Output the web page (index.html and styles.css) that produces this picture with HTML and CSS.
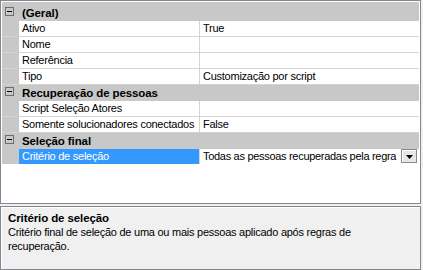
FILE: index.html
```html
<!DOCTYPE html>
<html lang="pt">
<head>
<meta charset="utf-8">
<link rel="stylesheet" href="styles.css">
</head>
<body>
<div class="grid">
  <div class="top-gap"></div>
  <div class="cat"><span class="toggle"></span><span class="cat-label">(Geral)</span></div>
  <div class="row"><div class="margin"></div><div class="name">Ativo</div><div class="value">True</div></div>
  <div class="row"><div class="margin"></div><div class="name">Nome</div><div class="value"></div></div>
  <div class="row"><div class="margin"></div><div class="name">Referência</div><div class="value"></div></div>
  <div class="row"><div class="margin"></div><div class="name">Tipo</div><div class="value">Customização por script</div></div>
  <div class="cat"><span class="toggle"></span><span class="cat-label">Recuperação de pessoas</span></div>
  <div class="row"><div class="margin"></div><div class="name">Script Seleção Atores</div><div class="value"></div></div>
  <div class="row"><div class="margin"></div><div class="name">Somente solucionadores conectados</div><div class="value">False</div></div>
  <div class="cat"><span class="toggle"></span><span class="cat-label">Seleção final</span></div>
  <div class="row selected"><div class="margin"></div><div class="name">Critério de seleção</div><div class="value"><span class="value-text">Todas as pessoas recuperadas pela regra</span><span class="drop"><svg width="7" height="4" viewBox="0 0 7 4"><path d="M0 0h7L3.5 4z" fill="#000"/></svg></span></div></div>
</div>
<div class="desc">
  <div class="desc-title">Critério de seleção</div>
  <div class="desc-text">Critério final de seleção de uma ou mais pessoas aplicado após regras de<br>recuperação.</div>
</div>
</body>
</html>
```

FILE: styles.css
```css
html, body {
  margin: 0;
  padding: 0;
}
body {
  width: 423px;
  height: 270px;
  background: #f0f0f0;
  font-family: "Liberation Sans", Arial, sans-serif;
  font-size: 11px;
  letter-spacing: -0.25px;
  color: #000;
  overflow: hidden;
}
.grid {
  box-sizing: border-box;
  width: 421px;
  height: 204px;
  border: 1px solid #828790;
  padding: 1px;
  background: #fff;
  overflow: hidden;
}
.top-gap {
  height: 3px;
  background: #c8c8c8;
}
.cat {
  box-sizing: border-box;
  height: 16px;
  background: #c8c8c8;
  display: flex;
  align-items: center;
  font-weight: bold;
  font-size: 11.5px;
  letter-spacing: -0.1px;
}
.toggle {
  box-sizing: border-box;
  width: 9px;
  height: 9px;
  margin-left: 3px;
  margin-right: 8px;
  border: 1px solid #6d6d6d;
  position: relative;
  flex: none;
  align-self: flex-start;
  margin-top: 2px;
}
.toggle::after {
  content: "";
  position: absolute;
  left: 1px;
  top: 3px;
  width: 5px;
  height: 1px;
  background: #000;
}
.cat-label {
  line-height: 15px;
}
.row {
  box-sizing: border-box;
  height: 16px;
  display: grid;
  grid-template-columns: 17px 181px 1fr;
  border-bottom: 1px solid #d4d4d4;
  line-height: 15px;
}
.margin {
  background: #c8c8c8;
}
.name {
  box-sizing: border-box;
  padding-left: 3px;
  border-right: 1px solid #d4d4d4;
  white-space: nowrap;
  overflow: hidden;
}
.value {
  padding-left: 3px;
  white-space: nowrap;
  overflow: hidden;
  display: flex;
}
.selected {
  border-bottom-color: transparent;
}
.selected .name {
  background: #3399ff;
  color: #fff;
}
.value-text {
  flex: 1;
  letter-spacing: -0.3px;
}
.drop {
  box-sizing: border-box;
  flex: none;
  width: 16px;
  height: 14px;
  margin: 0 2px 0 0;
  border: 1px solid #8a8a8a;
  background: #e6e6e6;
  box-shadow: inset 1px 1px 0 #fff;
  display: flex;
  align-items: center;
  justify-content: center;
  padding-top: 1px;
}
.drop svg {
  display: block;
}
.desc {
  box-sizing: border-box;
  width: 421px;
  height: 64px;
  margin-top: 2px;
  border: 1px solid #828790;
  box-shadow: inset 1px 1px 0 #fff;
  background: #f0f0f0;
  padding: 4px 7px 0 7px;
  line-height: 14px;
}
.desc-title {
  font-weight: bold;
  font-size: 11.5px;
  letter-spacing: -0.1px;
}
```
